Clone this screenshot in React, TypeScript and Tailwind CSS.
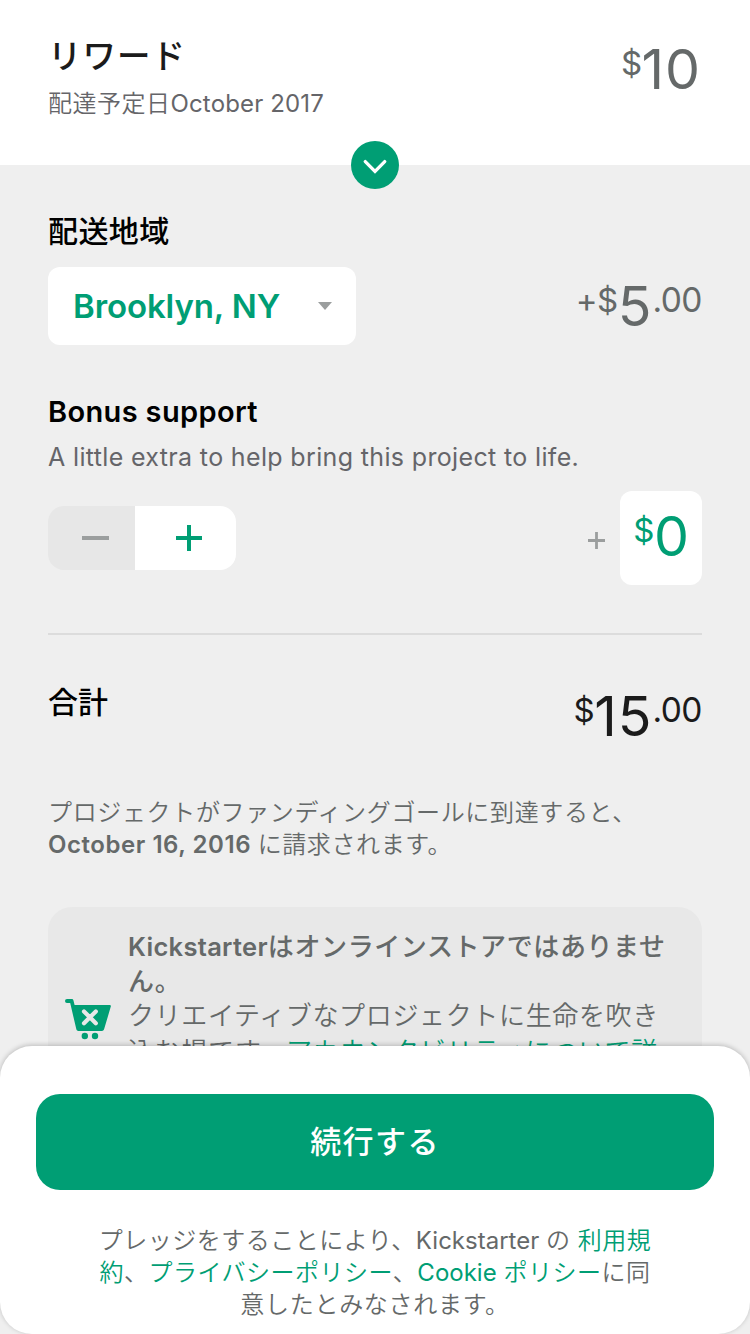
import React from "react";

const SANS = "font-['Inter','Noto_Sans_CJK_JP',sans-serif]";

function Price({
  prefix,
  whole,
  cents,
  className,
}: {
  prefix: string;
  whole: string;
  cents?: string;
  className: string;
}) {
  return (
    <div className={`flex items-start leading-none ${className}`}>
      <span className="mt-[5px] text-[33px] leading-none tracking-[-0.5px]">{prefix}</span>
      <span className="text-[55.5px] leading-[54px] tracking-[0.9px]">{whole}</span>
      {cents && <span className="mt-[5px] text-[33.5px] leading-none tracking-[-0.5px]">{cents}</span>}
    </div>
  );
}

function CartIcon() {
  return (
    <svg className="block h-[42px] w-[48px]" viewBox="0 0 48 42" fill="none">
      <path d="M3 1H8Q9 1 9.4 2.2L10.6 7H45.6Q47.3 7 46.8 8.6L40 31.6Q39.4 33 38 33H14.2Q12.8 33 12.4 31.6L6.2 5H3Q1 5 1 3T3 1Z" fill="#009e74" />
      <path d="M20 13.4L31.8 25.2M31.8 13.4L20 25.2" stroke="#e8e8e8" strokeWidth="4.2" strokeLinecap="round" />
      <circle cx="20.8" cy="38" r="3.2" fill="#009e74" />
      <circle cx="31" cy="38" r="3.2" fill="#009e74" />
    </svg>
  );
}

export default function App() {
  return (
    <div className={`relative h-[1334px] w-[750px] overflow-hidden bg-[#efefef] whitespace-nowrap ${SANS}`}>
      <header className="relative flex h-[165px] justify-between bg-white px-12">
        <div className="pt-[36px]">
          <h1 className="h-[40px] text-[33.5px] font-medium leading-[40px] tracking-[1px] text-[#1b1b1b]">リワード</h1>
          <p className="mt-[12px] h-[32px] text-[24px] font-[350] leading-[32px] tracking-[0.5px] text-[#656569]">
            配達予定日<span className="font-normal tracking-[0.15px]">October 2017</span>
          </p>
        </div>
        <Price prefix="$" whole="10" className="pt-[42px] pr-px text-[#656969]" />
        <button className="absolute bottom-[-24px] left-[351px] flex h-12 w-12 items-center justify-center rounded-full bg-[#009e74]">
          <svg className="h-6 w-6" viewBox="0 0 24 24" fill="none">
            <path d="M2.3 8.6L12 18.3L21.7 8.6" stroke="#fff" strokeWidth="3.3" strokeLinecap="round" />
          </svg>
        </button>
      </header>

      <main className="px-12">
        <section>
          <h2 className="pt-[46px] text-[30px] font-medium leading-[40px] tracking-[0.4px] text-black">配送地域</h2>
          <div className="mt-[16px] flex h-[78px] items-start justify-between">
            <button className="flex h-[78px] w-[308px] items-center justify-between rounded-xl bg-white pr-[24px] pl-[25px]">
              <span className="text-[33px] font-semibold leading-[40px] tracking-[-0.1px] text-[#009e74]">Brooklyn, NY</span>
              <svg className="h-[8px] w-[14px]" viewBox="0 0 14 8">
                <path d="M0 0H14L7 8Z" fill="#9b9e9e" />
              </svg>
            </button>
            <Price prefix="+$" whole="5" cents=".00" className="pt-[12px] text-[#656969]" />
          </div>
        </section>

        <section className="pt-[47px]">
          <h2 className="text-[29px] font-semibold leading-[40px] tracking-[0.35px] text-black">Bonus support</h2>
          <p className="mt-[9px] text-[25px] leading-[32px] tracking-[0.35px] text-[#656569]">
            A little extra to help bring this project to life.
          </p>
          <div className="mt-[18px] flex h-[94px] items-start justify-between">
            <div className="mt-[15px] flex h-16 w-[188px] overflow-hidden rounded-2xl">
              <button className="flex w-[87px] items-center justify-center bg-[#e7e7e7] pl-[7px]">
                <span className="h-1 w-[27px] bg-[#9b9e9e]" />
              </button>
              <button className="flex flex-1 items-center justify-center bg-white pl-[7px]">
                <svg className="h-[26px] w-[26px]" viewBox="0 0 26 26">
                  <path d="M0 13H26M13 0V26" stroke="#009e74" strokeWidth="4" />
                </svg>
              </button>
            </div>
            <div className="flex">
              <svg className="mt-[41px] mr-[15px] h-[17px] w-[17px]" viewBox="0 0 17 17">
                <path d="M0 8.5H17M8.5 0V17" stroke="#9b9e9e" strokeWidth="2.8" />
              </svg>
              <div className="flex h-[94px] w-[82px] justify-center rounded-xl bg-white">
                <Price prefix="$" whole="0" className="pt-[18px] pl-px text-[#009e74]" />
              </div>
            </div>
          </div>
        </section>

        <div className="mt-[48px] h-[2px] bg-[#dcdcdc]" />

        <section className="flex h-[110px] justify-between">
          <h2 className="pt-[47px] text-[30px] font-medium leading-[40px] text-black">合計</h2>
          <Price prefix="$" whole="15" cents=".00" className="pt-[54px] text-[#1b1b1b]" />
        </section>

        <p className="mt-[52px] text-[24px] font-[350] leading-[32px] text-[#656969]">
          <span className="block tracking-[0.65px]">プロジェクトがファンディングゴールに到達すると、</span>
          <span className="block tracking-[0.6px]">
            <b className="font-semibold tracking-[0.55px]">October 16, 2016 </b>に請求されます。
          </span>
        </p>

        <section className="mt-[46px] flex h-[224px] rounded-3xl bg-[#e8e8e8] pt-[23px] pl-4">
          <div className="pt-[68px]">
            <CartIcon />
          </div>
          <p className="ml-4 text-[26px] font-[350] leading-[34.5px] tracking-[0.65px] text-[#656969]">
            <b className="block font-medium tracking-[0.6px]">
              <span className="text-[25.5px] font-semibold tracking-[0.3px]">Kickstarter</span>はオンラインストアではありませ
            </b>
            <b className="block font-medium">ん。</b>
            <span className="block">クリエイティブなプロジェクトに生命を吹き</span>
            <span className="block pt-px tracking-[0.75px]">
              込む場です。<span className="text-[#009e74]">アカウンタビリティについて詳</span>
            </span>
          </p>
        </section>
      </main>

      <footer className="absolute inset-x-0 bottom-0 h-[288px] rounded-[32px] bg-white px-9 pt-12 shadow-[0_-1px_5px_rgba(0,0,0,0.22)]">
        <button className="flex h-24 w-full items-center justify-center rounded-3xl bg-[#009e74] text-[31px] font-medium leading-[40px] tracking-[1.4px] text-white">
          続行する
        </button>
        <p className="mt-[35px] text-center text-[24px] font-[350] leading-[32px] tracking-[0.5px] text-[#656969]">
          <span className="block">
            プレッジをすることにより、<span className="font-normal tracking-[0px]">Kickstarter </span>の <a className="text-[#009e74]">利用規</a>
          </span>
          <span className="block">
            <a className="text-[#009e74]">約</a>、<a className="text-[#009e74]">プライバシーポリシー</a>、
            <a className="text-[#009e74]"><span className="font-normal tracking-[0px]">Cookie </span>ポリシー</a>に同
          </span>
          <span className="block tracking-[0.7px]">意したとみなされます。</span>
        </p>
      </footer>
    </div>
  );
}
